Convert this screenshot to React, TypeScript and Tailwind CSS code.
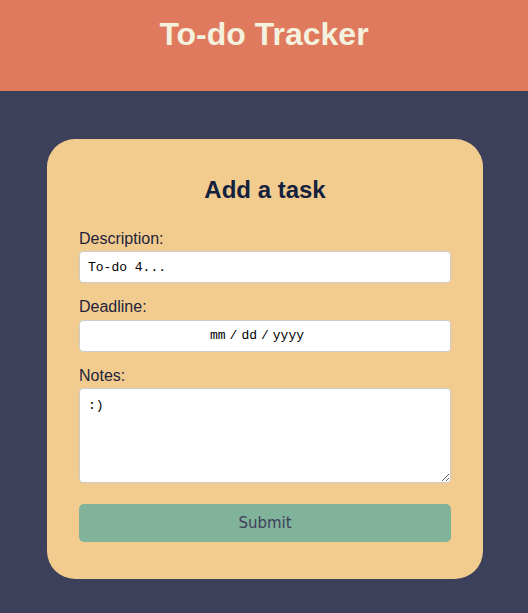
import React from "react";

export default function App() {
  return (
    <div className="min-h-[613px] w-full bg-[#3d405b]" style={{ fontFamily: '"Liberation Sans", Arial, sans-serif' }}>
      <header className="h-[91px] bg-[#e07a5f] pt-[14px]">
        <h1 className="text-center text-[32px] font-bold leading-[40px] text-[#f4f1de]">To-do Tracker</h1>
      </header>
      <div className="pl-[2px] pt-[48px]">
        <div className="mx-auto w-[436px] rounded-[28px] bg-[#f2cc8f] px-[32px] pb-[37px] pt-[36px]">
          <h2 className="text-center text-[24px] font-bold leading-[30px] text-[#14213d]">Add a task</h2>
          <div className="mt-[25px] flex flex-col">
            <label className="text-[16px] leading-[18px] text-[#22223b]">Description:</label>
            <input
              readOnly
              value="To-do 4..."
              className="mt-[3px] h-[32px] w-full rounded-[4px] border border-[#cccccc] bg-white px-[8px] text-[13px] text-black outline-none"
              style={{ fontFamily: '"Liberation Mono", "Courier New", monospace' }}
            />
            <label className="mt-[15px] text-[16px] leading-[18px] text-[#22223b]">Deadline:</label>
            <div
              className="mt-[4px] flex h-[32px] w-full items-center justify-center rounded-[4px] border border-[#cccccc] bg-white pr-[16px] text-[13px] text-black"
              style={{ fontFamily: '"Liberation Mono", "Courier New", monospace' }}
            >
              <span>mm</span>
              <span className="mx-[4px]">/</span>
              <span>dd</span>
              <span className="mx-[4px]">/</span>
              <span>yyyy</span>
            </div>
            <label className="mt-[15px] text-[16px] leading-[18px] text-[#22223b]">Notes:</label>
            <textarea
              readOnly
              value=":)"
              className="mt-[3px] h-[95px] w-full rounded-[4px] border border-[#cccccc] bg-white px-[8px] py-[7px] text-[13px] text-black outline-none"
              style={{ fontFamily: '"Liberation Mono", "Courier New", monospace' }}
            />
            <button
              className="mt-[21px] h-[38px] w-full rounded-[5px] bg-[#81b29a] text-[15px] text-[#3d405b]"
              style={{ fontFamily: '"DejaVu Sans", Tahoma, sans-serif' }}
            >
              Submit
            </button>
          </div>
        </div>
      </div>
    </div>
  );
}
